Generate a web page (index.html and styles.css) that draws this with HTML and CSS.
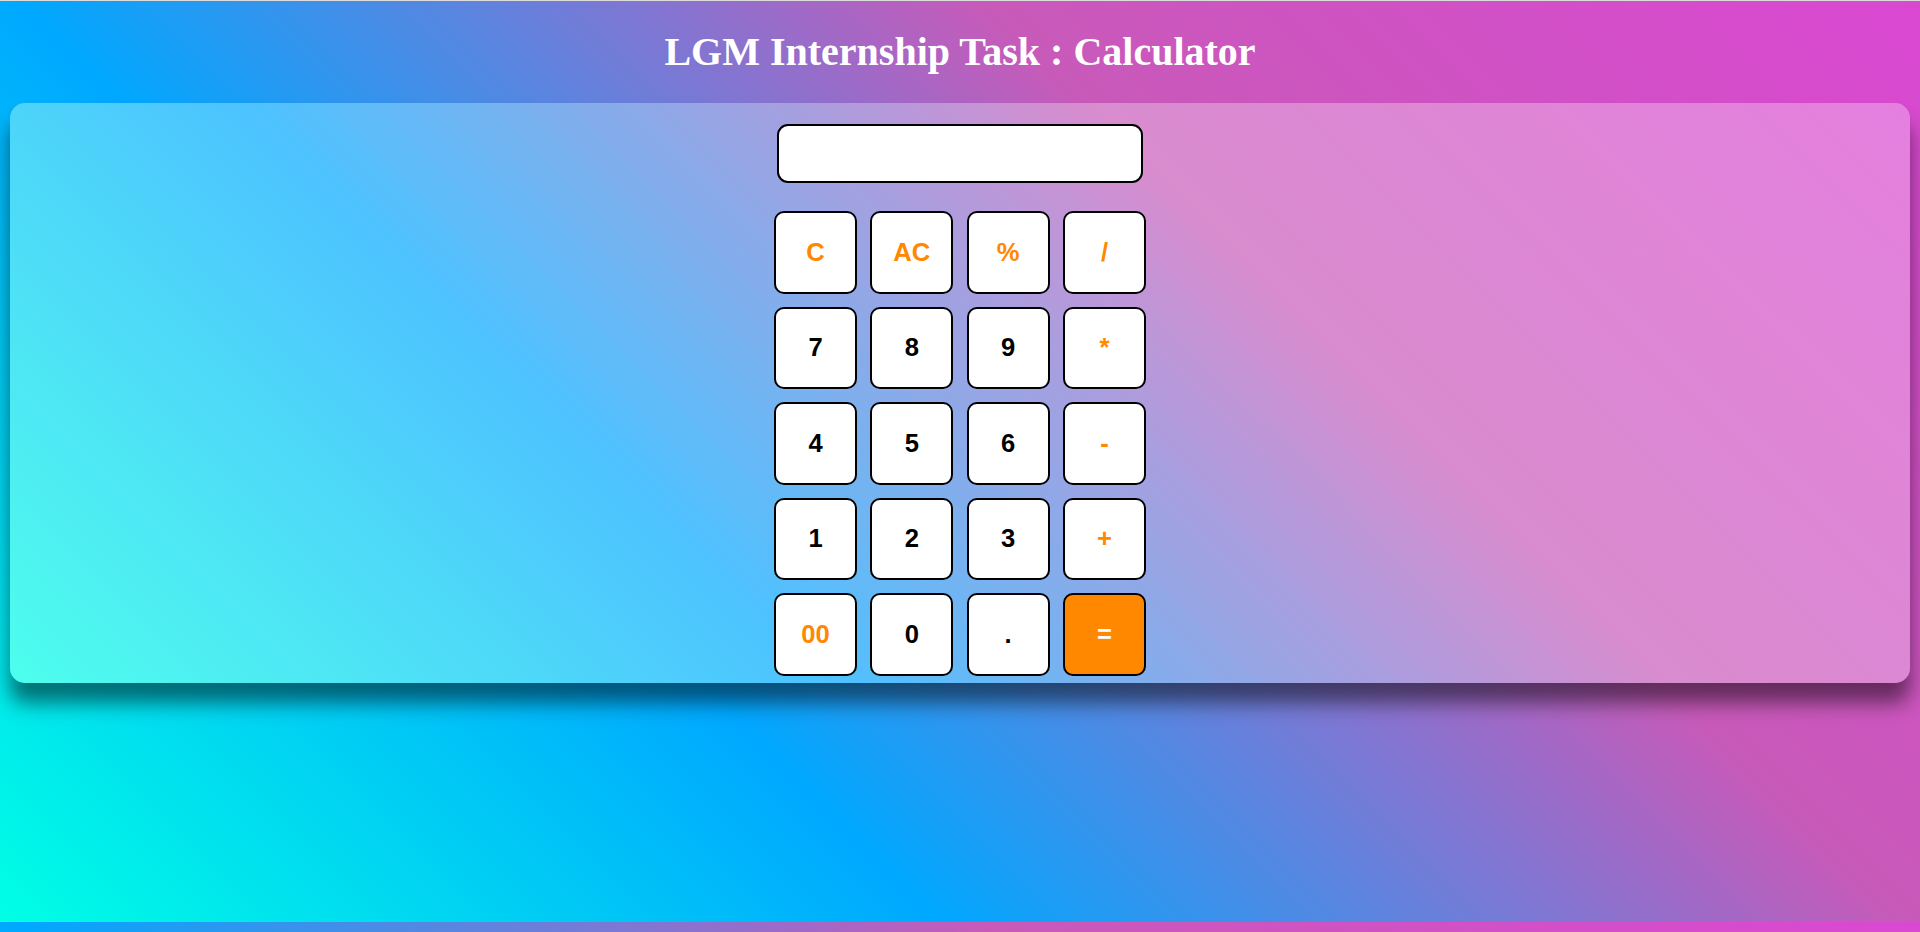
FILE: index.html
```html
<!DOCTYPE html>
<html lang="en">
<head>
<meta charset="utf-8">
<title>Calculator</title>
<link rel="stylesheet" href="styles.css">
</head>
<body>
  <h1 class="title">LGM Internship Task : Calculator</h1>
  <main class="card">
    <div class="calc">
      <div class="display"></div>
      <div class="keys">
        <button class="key op">C</button>
        <button class="key op">AC</button>
        <button class="key op">%</button>
        <button class="key op">/</button>
        <button class="key">7</button>
        <button class="key">8</button>
        <button class="key">9</button>
        <button class="key op">*</button>
        <button class="key">4</button>
        <button class="key">5</button>
        <button class="key">6</button>
        <button class="key op">-</button>
        <button class="key">1</button>
        <button class="key">2</button>
        <button class="key">3</button>
        <button class="key op">+</button>
        <button class="key op">00</button>
        <button class="key">0</button>
        <button class="key">.</button>
        <button class="key equals">=</button>
      </div>
    </div>
  </main>
</body>
</html>
```

FILE: styles.css
```css
html {
  box-sizing: border-box;
  min-height: 100%;
  border-top: 1px solid #dcdcdc;
  background-color: #00a8ff;
  background-image: linear-gradient(45deg, #00ffe5 0%, #00a8ff 33%, #c85ab9 67%, #da48d2 100%);
  background-size: 100% 921px;
  background-repeat: repeat-y;
}

body {
  margin: 0;
  padding-top: 28px;
  min-height: 880px;
}

.title {
  margin: 0 0 28px;
  font-family: "Liberation Serif", "Times New Roman", serif;
  font-weight: bold;
  font-size: 40px;
  line-height: 46px;
  color: #ffffff;
  text-align: center;
}

.card {
  position: relative;
  display: flex;
  justify-content: center;
  margin: 0 10px;
  padding: 21px 0 7px;
  border-radius: 15px;
  background-image:
    linear-gradient(rgba(255, 255, 255, 0.3), rgba(255, 255, 255, 0.3)),
    linear-gradient(45deg, #00ffe5 0%, #00a8ff 33%, #c85ab9 67%, #da48d2 100%);
  box-shadow: 0 20px 20px rgba(0, 0, 0, 0.5);
}

.calc {
  display: flex;
  flex-direction: column;
  align-items: center;
}

.display {
  box-sizing: border-box;
  width: 366px;
  height: 59px;
  margin-bottom: 28px;
  background: #ffffff;
  border: 2px solid #000000;
  border-radius: 11px;
}

.keys {
  display: grid;
  grid-template-columns: repeat(4, 83px);
  grid-auto-rows: 82.5px;
  column-gap: 13.33px;
  row-gap: 13px;
}

.key {
  display: flex;
  align-items: center;
  justify-content: center;
  box-sizing: border-box;
  padding: 0;
  margin: 0;
  background: #ffffff;
  border: 2px solid #000000;
  border-radius: 10px;
  font-family: "Liberation Sans", Arial, sans-serif;
  font-weight: bold;
  font-size: 25.6px;
  color: #000000;
}

.key.op {
  color: #ff8800;
}

.key.equals {
  background: #ff8800;
  color: #ffffff;
}
```
